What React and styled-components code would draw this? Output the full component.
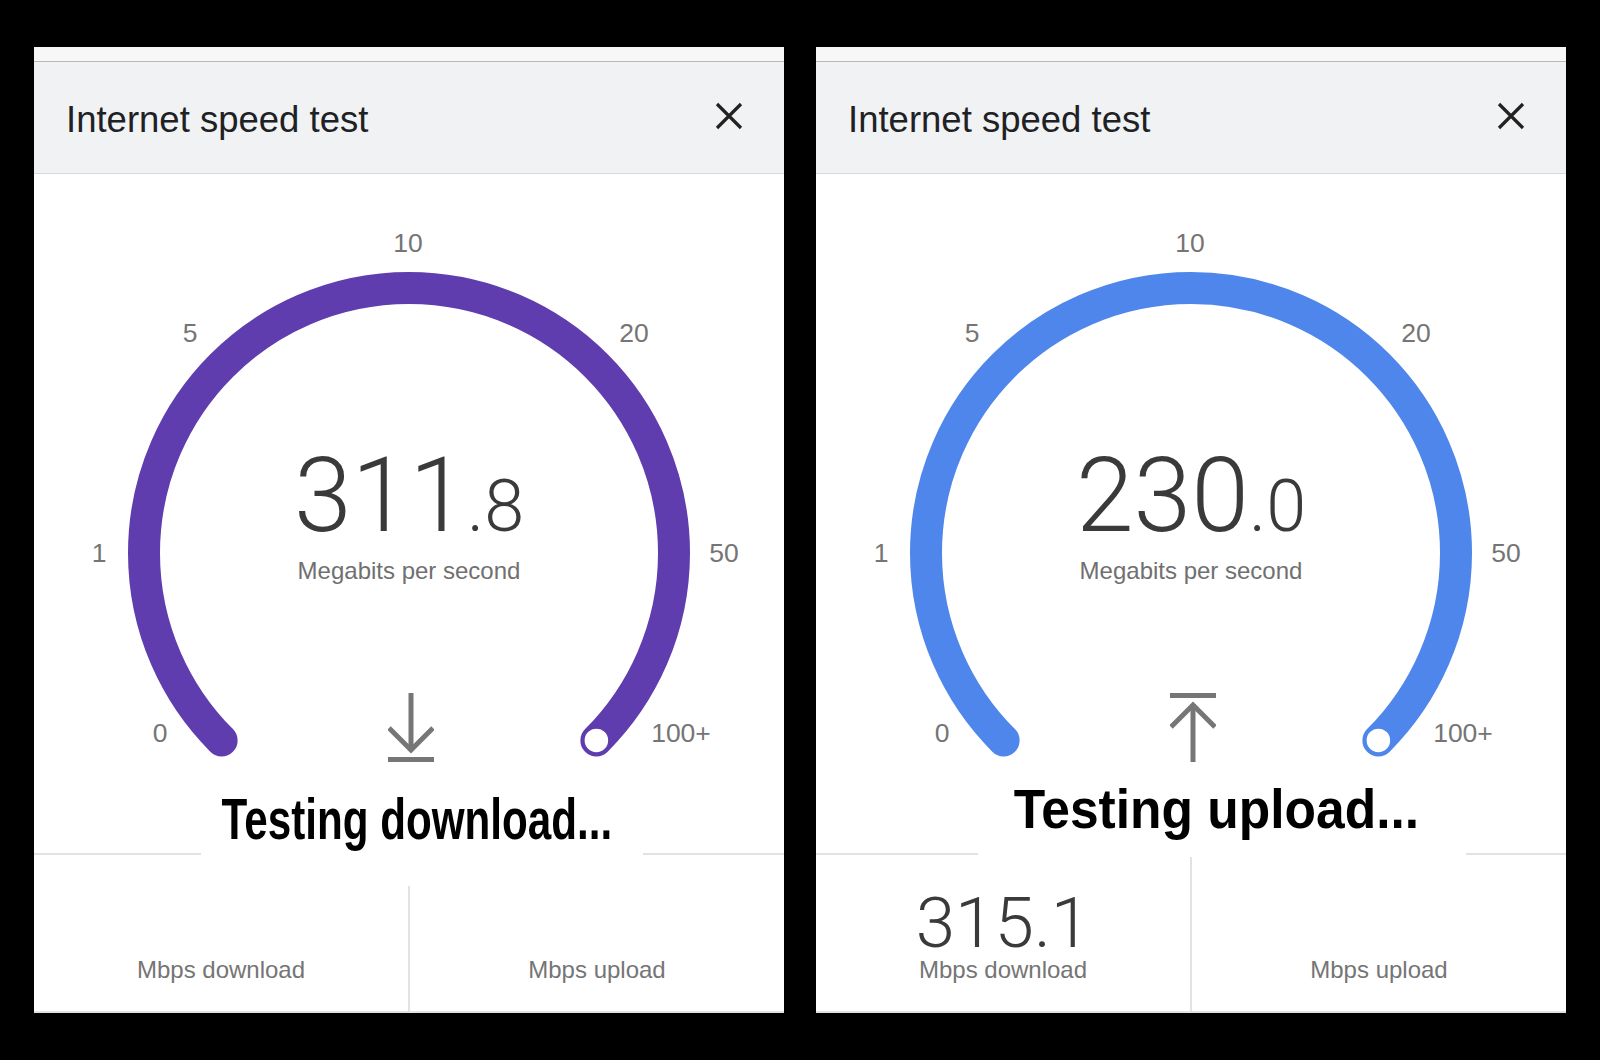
import React from "react";
import styled, { createGlobalStyle } from "styled-components";

const GlobalStyle = createGlobalStyle`
  html, body {
    margin: 0;
    background: #000;
  }
  * {
    box-sizing: border-box;
  }
`;

const Page = styled.div`
  display: flex;
  gap: 32px;
  height: 1060px;
  padding: 47px 34px 0;
  font-family: "Liberation Sans", Arial, sans-serif;
`;

const Panel = styled.section`
  width: 750px;
  height: 966px;
  display: flex;
  flex-direction: column;
  background: #fff;
  overflow: hidden;
`;

const TopStrip = styled.div`
  height: 15px;
  background: #f7f7f7;
  border-bottom: 1px solid #b9b9b9;
`;

const Header = styled.header`
  height: 112px;
  display: flex;
  align-items: center;
  justify-content: space-between;
  padding: 0 41px 0 32px;
  background: #f1f2f3;
  border-bottom: 1px solid #d9d9d9;
`;

const Title = styled.h1`
  margin: 4px 0 0;
  font-size: 36.5px;
  font-weight: 400;
  color: #202124;
`;

const CloseButton = styled.button`
  border: none;
  background: transparent;
  padding: 0;
  margin-top: -4px;
  width: 28px;
  height: 28px;
  display: flex;
  cursor: pointer;
`;

const Dial = styled.div`
  position: relative;
  height: 600px;
`;

const Arc = styled.svg`
  position: absolute;
  left: 0;
  top: 0;
`;

const Tick = styled.span`
  position: absolute;
  transform: translate(-50%, -50%);
  font-size: 26.5px;
  color: #757575;
  white-space: nowrap;
`;

const Readout = styled.div`
  position: absolute;
  top: 270px;
  left: 0;
  right: 0;
  text-align: center;
`;

const Speed = styled.div`
  font-family: Roboto, "Liberation Sans", sans-serif;
  font-weight: 300;
  font-size: 104px;
  line-height: 1;
  color: #3a3a3a;
`;

const Fraction = styled.span`
  font-size: 72px;
`;

const Unit = styled.div`
  margin-top: 9px;
  font-size: 24px;
  line-height: 1.2;
  color: #707070;
`;

const ArrowIcon = styled.svg`
  position: absolute;
  left: 354px;
  top: 519px;
`;

const StatusRow = styled.div`
  height: 81px;
  display: flex;
  align-items: flex-end;
`;

const Rule = styled.div`
  flex: ${({ $lead }) => ($lead ? `0 0 ${$lead}px` : "1")};
  height: 2px;
  background: #e2e2e2;
`;

const StatusBox = styled.div`
  flex: 0 0 ${({ $width }) => $width}px;
  height: 100%;
  display: flex;
  align-items: flex-end;
  justify-content: center;
  padding-bottom: ${({ $pad }) => $pad}px;
  background: #fff;
`;

const StatusText = styled.span`
  display: inline-block;
  margin: 0 -80px;
  white-space: nowrap;
  font-size: ${({ $size }) => $size}px;
  font-weight: 700;
  line-height: 1;
  color: #000;
  transform: translateX(${({ $nudge }) => $nudge}px) scaleX(${({ $scale }) => $scale});
`;

const Stats = styled.div`
  flex: 1;
  display: grid;
  grid-template-columns: 1fr 2px 1fr;
  border-bottom: 2px solid #e2e2e2;
`;

const StatCell = styled.div`
  display: flex;
  flex-direction: column;
  justify-content: flex-end;
  align-items: center;
  padding-bottom: 26px;
`;

const StatDivider = styled.div`
  margin-top: ${({ $offset }) => $offset}px;
  background: #e2e2e2;
`;

const StatValue = styled.div`
  font-family: Roboto, "Liberation Sans", sans-serif;
  font-weight: 300;
  font-size: 71px;
  line-height: 0.85;
  margin-bottom: 3px;
  color: #3a3a3a;
`;

const StatLabel = styled.div`
  font-size: 24px;
  line-height: 1.2;
  color: #757575;
`;

const ticks = [
  { text: "0", dx: -249, dy: 180 },
  { text: "1", dx: -310, dy: 0 },
  { text: "5", dx: -219, dy: -220 },
  { text: "10", dx: -1, dy: -310 },
  { text: "20", dx: 225, dy: -220 },
  { text: "50", dx: 315, dy: 0 },
  { text: "100+", dx: 272, dy: 180 },
];

const CX = 375;
const CY = 379;
const R = 265;

const tests = [
  {
    color: "#5f3dae",
    whole: "311",
    frac: ".8",
    direction: "down",
    status: "Testing download...",
    lead: 167,
    boxWidth: 442,
    size: 57,
    scale: 0.74,
    nudge: -5,
    pad: 7,
    dividerOffset: 31,
    download: null,
  },
  {
    color: "#4f86eb",
    whole: "230",
    frac: ".0",
    direction: "up",
    status: "Testing upload...",
    lead: 162,
    boxWidth: 488,
    size: 56,
    scale: 0.92,
    nudge: -6,
    pad: 18,
    dividerOffset: 2,
    download: "315.1",
  },
];

const CloseIcon = () => (
  <svg width="28" height="28" viewBox="0 0 28 28">
    <path d="M2 2 L26 26 M26 2 L2 26" stroke="#222" strokeWidth="3.2" fill="none" />
  </svg>
);

const Arrow = ({ direction }) => (
  <ArrowIcon width="46" height="69" viewBox="0 0 46 69">
    {direction === "down" ? (
      <g stroke="#767676" strokeWidth="5" fill="none">
        <path d="M23 0 V58" />
        <path d="M1 35 L23 57 L45 35" />
        <path d="M0 66.5 H46" />
      </g>
    ) : (
      <g stroke="#767676" strokeWidth="5" fill="none">
        <path d="M23 69 V11" />
        <path d="M1 34 L23 12 L45 34" />
        <path d="M0 2.5 H46" />
      </g>
    )}
  </ArrowIcon>
);

const Gauge = ({ color }) => {
  const off = R * Math.SQRT1_2;
  const sx = CX - off;
  const ex = CX + off;
  const y = CY + off;
  return (
    <Arc width="750" height="600" viewBox="0 0 750 600">
      <path
        d={`M ${sx} ${y} A ${R} ${R} 0 1 1 ${ex} ${y}`}
        stroke={color}
        strokeWidth="32"
        strokeLinecap="round"
        fill="none"
      />
      <circle cx={ex} cy={y} r="13" fill="#fff" stroke={color} strokeWidth="2.5" />
    </Arc>
  );
};

const SpeedPanel = ({ test }) => (
  <Panel>
    <TopStrip />
    <Header>
      <Title>Internet speed test</Title>
      <CloseButton aria-label="Close">
        <CloseIcon />
      </CloseButton>
    </Header>

    <Dial>
      <Gauge color={test.color} />
      {ticks.map((t) => (
        <Tick key={t.text} style={{ left: CX + t.dx, top: CY + t.dy }}>
          {t.text}
        </Tick>
      ))}
      <Readout>
        <Speed>
          {test.whole}
          <Fraction>{test.frac}</Fraction>
        </Speed>
        <Unit>Megabits per second</Unit>
      </Readout>
      <Arrow direction={test.direction} />
    </Dial>

    <StatusRow>
      <Rule $lead={test.lead} />
      <StatusBox $width={test.boxWidth} $pad={test.pad}>
        <StatusText $size={test.size} $scale={test.scale} $nudge={test.nudge}>
          {test.status}
        </StatusText>
      </StatusBox>
      <Rule />
    </StatusRow>

    <Stats>
      <StatCell>
        {test.download && <StatValue>{test.download}</StatValue>}
        <StatLabel>Mbps download</StatLabel>
      </StatCell>
      <StatDivider $offset={test.dividerOffset} />
      <StatCell>
        <StatLabel>Mbps upload</StatLabel>
      </StatCell>
    </Stats>
  </Panel>
);

export default function App() {
  return (
    <>
      <GlobalStyle />
      <Page>
        {tests.map((t) => (
          <SpeedPanel key={t.direction} test={t} />
        ))}
      </Page>
    </>
  );
}
